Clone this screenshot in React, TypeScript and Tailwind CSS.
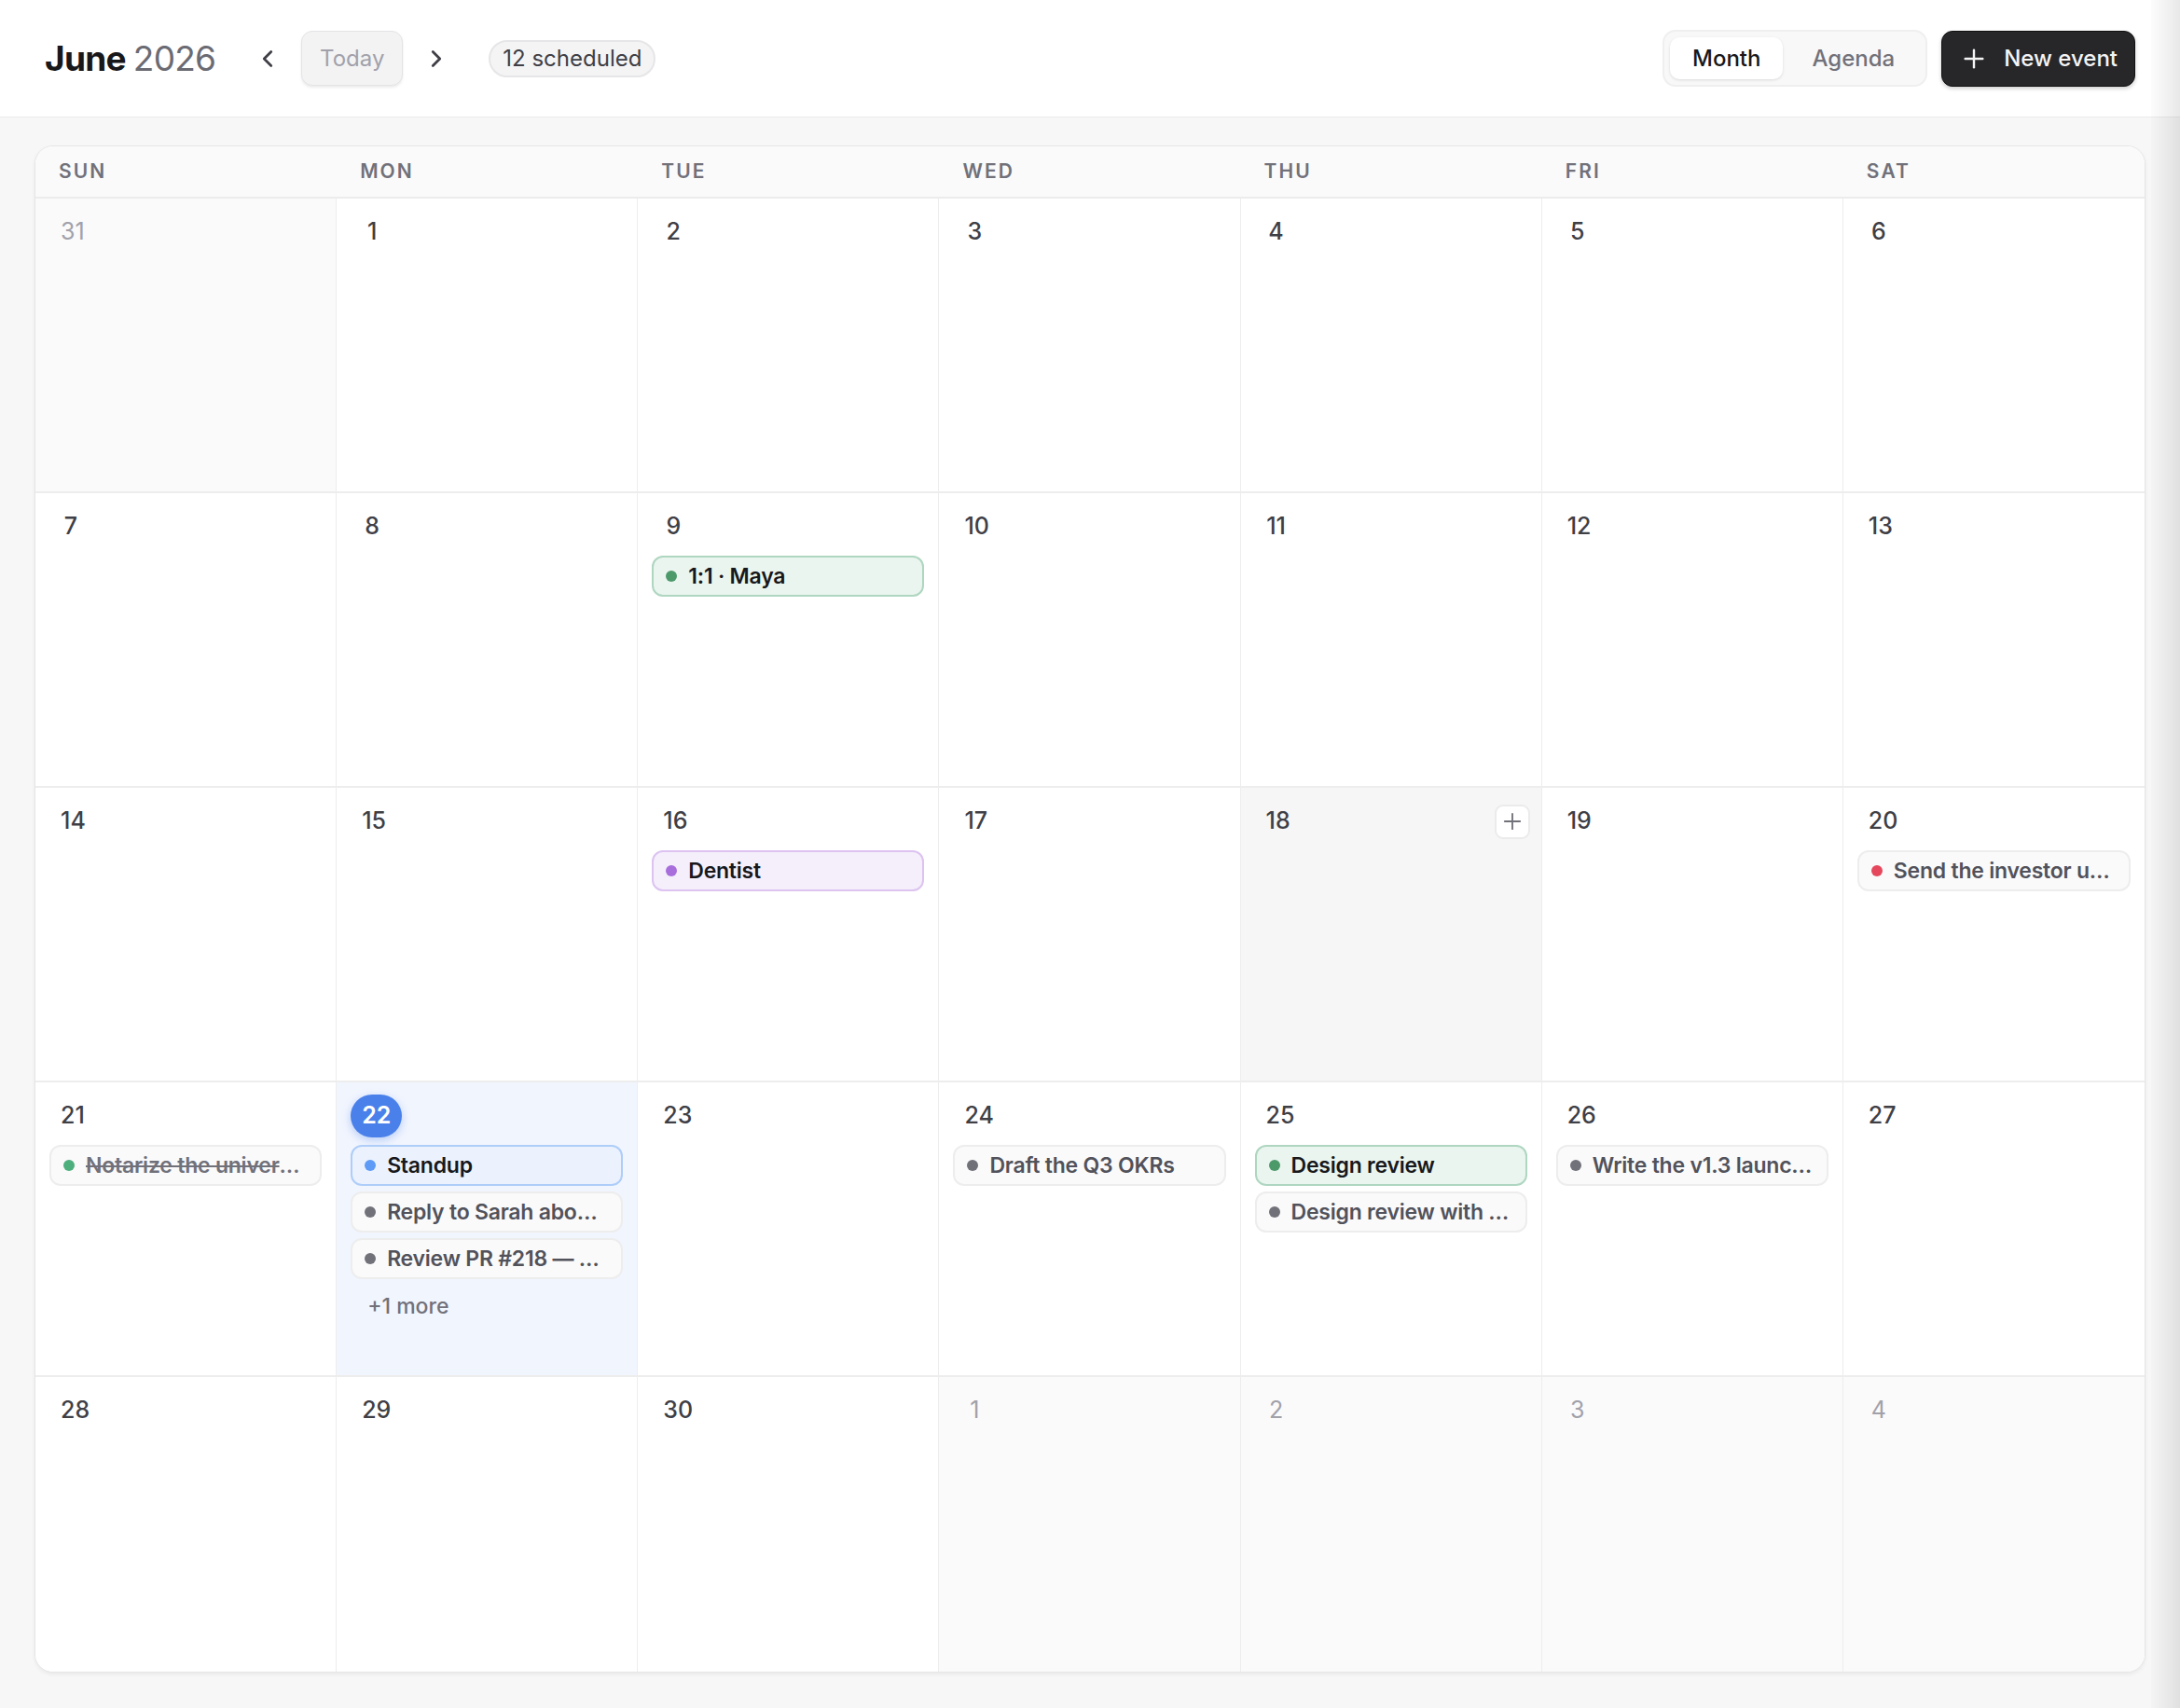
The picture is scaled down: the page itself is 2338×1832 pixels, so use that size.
import { ChevronLeft, ChevronRight, Plus } from "lucide-react";

type Tone = "green" | "purple" | "blue" | "neutral";

type CalEvent = {
  title: string;
  tone: Tone;
  dot?: string;
  done?: boolean;
};

type Day = {
  n: number;
  outside?: boolean;
  today?: boolean;
  hover?: boolean;
  events?: CalEvent[];
  more?: number;
};

const weekdays = ["SUN", "MON", "TUE", "WED", "THU", "FRI", "SAT"];

const chipTone: Record<Tone, string> = {
  green: "bg-[#ebf5ef] border-[#aed6c0] text-[#18181b]",
  purple: "bg-[#f5effc] border-[#dcc3f0] text-[#18181b]",
  blue: "bg-[#ebf2fe] border-[#aecdf8] text-[#18181b]",
  neutral: "bg-[#fafafa] border-[#ededed] text-[#52525b]",
};

const dotTone: Record<Tone, string> = {
  green: "bg-[#4c9a6a]",
  purple: "bg-[#a86fdc]",
  blue: "bg-[#5d9bf6]",
  neutral: "bg-[#71717a]",
};

const days: Day[] = [
  { n: 31, outside: true },
  { n: 1 },
  { n: 2 },
  { n: 3 },
  { n: 4 },
  { n: 5 },
  { n: 6 },
  { n: 7 },
  { n: 8 },
  { n: 9, events: [{ title: "1:1 · Maya", tone: "green" }] },
  { n: 10 },
  { n: 11 },
  { n: 12 },
  { n: 13 },
  { n: 14 },
  { n: 15 },
  { n: 16, events: [{ title: "Dentist", tone: "purple" }] },
  { n: 17 },
  { n: 18, hover: true },
  { n: 19 },
  {
    n: 20,
    events: [{ title: "Send the investor update", tone: "neutral", dot: "bg-[#e5485d]" }],
  },
  {
    n: 21,
    events: [
      { title: "Notarize the university forms", tone: "neutral", dot: "bg-[#4caf7c]", done: true },
    ],
  },
  {
    n: 22,
    today: true,
    events: [
      { title: "Standup", tone: "blue" },
      { title: "Reply to Sarah about the offsite", tone: "neutral" },
      { title: "Review PR #218 — auth refactor", tone: "neutral" },
    ],
    more: 1,
  },
  { n: 23 },
  { n: 24, events: [{ title: "Draft the Q3 OKRs", tone: "neutral" }] },
  {
    n: 25,
    events: [
      { title: "Design review", tone: "green" },
      { title: "Design review with the brand team", tone: "neutral" },
    ],
  },
  { n: 26, events: [{ title: "Write the v1.3 launch notes", tone: "neutral" }] },
  { n: 27 },
  { n: 28 },
  { n: 29 },
  { n: 30 },
  { n: 1, outside: true },
  { n: 2, outside: true },
  { n: 3, outside: true },
  { n: 4, outside: true },
];

function EventChip({ ev }: { ev: CalEvent }) {
  return (
    <div
      className={`flex h-[44px] items-center gap-3 rounded-[12px] border-2 pl-[13px] pr-[12px] text-[23px] font-semibold tracking-[-0.01em] ${chipTone[ev.tone]}`}
    >
      <span className={`h-3 w-3 shrink-0 rounded-full ${ev.dot ?? dotTone[ev.tone]}`} />
      <span className={`min-w-0 truncate ${ev.done ? "line-through text-[#71717a]" : ""}`}>{ev.title}</span>
    </div>
  );
}

function DayCell({ day, last }: { day: Day; last: boolean }) {
  let bg = "bg-white";
  if (day.outside) bg = "bg-[#fafafa]";
  if (day.today) bg = "bg-[#f1f5fe]";
  if (day.hover) bg = "bg-[#f6f6f6]";

  return (
    <div className={`flex min-w-0 flex-col px-[15px] pt-[13px] ${bg} ${last ? "" : "border-r border-[#ededed]"}`}>
      <div className="flex items-center justify-between">
        <span
          className={`inline-flex h-[46px] min-w-[46px] items-center justify-center rounded-full px-3 text-[25px] ${
            day.today
              ? "bg-[#4a80ea] font-semibold text-white shadow-[0_3px_10px_rgba(74,128,234,0.35)]"
              : day.outside
              ? "font-normal text-[#a1a1aa]"
              : "font-medium text-[#3f3f46]"
          }`}
        >
          {day.n}
        </span>
        {day.hover && (
          <span className="mr-[-3px] flex h-[37px] w-[38px] items-center justify-center rounded-[9px] border-2 border-[#ebebeb] bg-white text-[#71717a]">
            <Plus size={28} strokeWidth={1.6} />
          </span>
        )}
      </div>
      {day.events && (
        <div className="mt-2 flex flex-col gap-1.5">
          {day.events.map((ev, i) => (
            <EventChip key={i} ev={ev} />
          ))}
          {day.more && (
            <div className="px-[18px] py-1.5 text-[23px] font-medium text-[#71717a]">+{day.more} more</div>
          )}
        </div>
      )}
    </div>
  );
}

export default function App() {
  const weeks: Day[][] = [];
  for (let i = 0; i < days.length; i += 7) weeks.push(days.slice(i, i + 7));

  return (
    <div
      className="relative min-h-screen bg-[#f7f7f7]"
      style={{ fontFamily: "Inter, 'Noto Sans', sans-serif" }}
    >
      <header className="flex h-[126px] items-center justify-between border-b border-[#ebebeb] bg-white px-12">
        <div className="flex items-center gap-9">
          <h1 className="text-[37px] font-bold tracking-[-0.02em] text-[#18181b]">
            June <span className="font-normal text-[#6b6b73]">2026</span>
          </h1>
          <div className="flex items-center gap-4">
            <button className="flex h-10 w-10 items-center justify-center text-[#3f3f46]">
              <ChevronLeft size={30} strokeWidth={2.2} />
            </button>
            <button className="h-[59px] w-[109px] rounded-[12px] border border-[#e4e4e7] bg-[#f3f3f4] text-[24px] text-[#a1a1aa] shadow-[0_2px_3px_rgba(0,0,0,0.08)]">
              Today
            </button>
            <button className="flex h-10 w-10 items-center justify-center text-[#3f3f46]">
              <ChevronRight size={30} strokeWidth={2.2} />
            </button>
          </div>
          <span className="flex h-[40px] items-center rounded-full border-2 border-[#e6e6e8] bg-[#f4f4f5] px-[13px] text-[24px] text-[#3f3f46]">
            12 scheduled
          </span>
        </div>
        <div className="flex items-center gap-[15px]">
          <div className="flex gap-1 rounded-[14px] border-2 border-[#efefef] bg-[#f8f8f8] p-[6px]">
            <button className="h-[45px] rounded-[10px] bg-white px-6 text-[24px] font-medium text-[#18181b] shadow-[0_1px_3px_rgba(0,0,0,0.12)]">
              Month
            </button>
            <button className="h-[45px] rounded-[10px] px-[27px] text-[24px] font-medium text-[#71717a]">Agenda</button>
          </div>
          <button className="flex h-[60px] items-center gap-4 rounded-[12px] border border-[#111113] bg-[#27272a] pl-[18px] pr-[18px] text-[24px] font-medium text-[#f4f4f5] shadow-[0_2px_4px_rgba(0,0,0,0.2)]">
            <Plus size={32} strokeWidth={1.8} />
            New event
          </button>
        </div>
      </header>

      <main className="px-[37px] pb-[39px] pt-[30px]">
        <div className="overflow-hidden rounded-[20px] border border-[#e6e6e6] bg-white shadow-[0_2px_4px_rgba(0,0,0,0.06)]">
          <div className="grid h-[56px] grid-cols-7 border-b-2 border-[#ececec] bg-[#fafafa]">
            {weekdays.map((d) => (
              <div
                key={d}
                className="flex items-center pl-[25px] text-[21px] font-semibold tracking-[0.1em] text-[#71717a]"
              >
                {d}
              </div>
            ))}
          </div>
          {weeks.map((week, wi) => (
            <div
              key={wi}
              className={`grid h-[316px] grid-cols-7 ${wi < weeks.length - 1 ? "border-b-2 border-[#ededed]" : ""}`}
            >
              {week.map((day, di) => (
                <DayCell key={di} day={day} last={di === 6} />
              ))}
            </div>
          ))}
        </div>
      </main>

      <div className="pointer-events-none fixed right-0 top-0 h-full w-[31px] bg-linear-to-r from-black/[0.01] to-black/[0.09]" />
    </div>
  );
}
